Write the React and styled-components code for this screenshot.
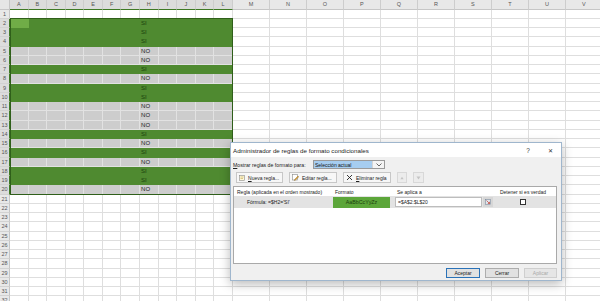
import styled, { createGlobalStyle } from "styled-components";

const GlobalStyle = createGlobalStyle`
  html, body { margin: 0; padding: 0; background: #fff; overflow: hidden; }
  body { font-family: "Liberation Sans", Arial, sans-serif; color: #222; }
`;

const COLS = "ABCDEFGHIJKLMNOPQRSTUV".split("");
const ROWS = 32;
const DATA = {
  2: "SI", 3: "SI", 4: "SI", 5: "NO", 6: "NO", 7: "SI", 8: "NO", 9: "SI", 10: "SI",
  11: "NO", 12: "NO", 13: "NO", 14: "SI", 15: "NO", 16: "SI", 17: "NO", 18: "SI",
  19: "SI", 20: "NO",
};

const FILL = { green: "#4f8a30", gray: "#cdcdcd", active: "#70ad47", none: "#fff" };
const LINE = { green: "#4f8a30", gray: "#e2e2e2", active: "#70ad47", none: "#dedede" };

function Sheet() {
  const cells = [<Corner key="corner" />];
  COLS.forEach((c, i) => cells.push(<ColHead key={c} $sel={i < 12}>{c}</ColHead>));
  for (let r = 1; r <= ROWS; r++) {
    const inRange = r >= 2 && r <= 20;
    cells.push(<RowHead key={"h" + r} $sel={inRange}>{r}</RowHead>);
    COLS.forEach((c, i) => {
      let fill = "none";
      if (inRange && i < 12) fill = DATA[r] === "SI" ? "green" : "gray";
      if (r === 2 && i === 0) fill = "active";
      cells.push(
        <Cell key={c + r} $fill={fill}>
          {inRange && i === 7 ? <CellText $yes={DATA[r] === "SI"}>{DATA[r]}</CellText> : null}
        </Cell>
      );
    });
  }
  return (
    <Grid>
      {cells}
      <Selection />
    </Grid>
  );
}

function Dialog() {
  return (
    <Window>
      <TitleBar>
        <TitleText>Administrador de reglas de formato condicionales</TitleText>
        <TitleBtn>?</TitleBtn>
        <TitleBtn $close>✕</TitleBtn>
      </TitleBar>
      <Body>
        <ShowRow>
          <ShowLabel><u>M</u>ostrar reglas de formato para:</ShowLabel>
          <Select>
            <SelectText>Selección actual</SelectText>
            <SelectArrow>
              <svg width="6" height="4" viewBox="0 0 6 4">
                <path d="M0.5 0.5 L3 3 L5.5 0.5" fill="none" stroke="#444" strokeWidth="0.8" />
              </svg>
            </SelectArrow>
          </Select>
        </ShowRow>
        <Toolbar>
          <ToolButton $w={47}>
            <svg width="6" height="6" viewBox="0 0 6 6">
              <rect x="0.5" y="0.5" width="5" height="5" fill="#fff7d6" stroke="#8a8a8a" strokeWidth="0.6" />
              <path d="M1.5 2 H4.5 M1.5 3.5 H4" stroke="#b59a3c" strokeWidth="0.5" />
            </svg>
            <span><u>N</u>ueva regla...</span>
          </ToolButton>
          <ToolButton $w={48}>
            <svg width="7" height="7" viewBox="0 0 7 7">
              <rect x="0.5" y="0.5" width="5" height="5.5" fill="#fff" stroke="#8a8a8a" strokeWidth="0.6" />
              <path d="M2.5 5.5 L6 2 L6.8 2.8 L3.3 6.3 L2.3 6.5 Z" fill="#e0a030" stroke="#6b5220" strokeWidth="0.3" />
            </svg>
            <span>Editar regla...</span>
          </ToolButton>
          <ToolButton $w={48}>
            <svg width="7" height="7" viewBox="0 0 7 7">
              <path d="M1 1 L6 6 M6 1 L1 6" stroke="#222" strokeWidth="0.9" />
            </svg>
            <span><u>E</u>liminar regla</span>
          </ToolButton>
          <ToolButton $w={10} $disabled>
            <svg width="5" height="4" viewBox="0 0 5 4">
              <path d="M0.5 3.5 L2.5 0.5 L4.5 3.5 Z" fill="#c4c4c4" />
            </svg>
          </ToolButton>
          <ToolButton $w={11} $disabled>
            <svg width="5" height="4" viewBox="0 0 5 4">
              <path d="M0.5 0.5 L2.5 3.5 L4.5 0.5 Z" fill="#c4c4c4" />
            </svg>
          </ToolButton>
        </Toolbar>
        <ListBox>
          <ListRow>
            <HeadCell>Regla (aplicada en el orden mostrado)</HeadCell>
            <HeadCell>Formato</HeadCell>
            <HeadCell $pad={4}>Se aplica a</HeadCell>
            <HeadCell $center>Detener si es verdad</HeadCell>
          </ListRow>
          <RuleRow>
            <RuleText>Fórmula: =$H2='SI'</RuleText>
            <PreviewCell>
              <Preview>AaBbCcYyZz</Preview>
            </PreviewCell>
            <RangeCell>
              <RangeInput>=$A$2:$L$20</RangeInput>
              <RangeButton>
                <svg width="6" height="6" viewBox="0 0 6 6">
                  <rect x="0.5" y="0.5" width="5" height="5" fill="#dfe6ee" stroke="#6c7c90" strokeWidth="0.5" />
                  <path d="M1.5 1.5 L4.5 4.5 M2.8 4.5 H4.5 V2.8" fill="none" stroke="#c0392b" strokeWidth="0.7" />
                </svg>
              </RangeButton>
            </RangeCell>
            <CheckCell>
              <CheckBox />
            </CheckCell>
          </RuleRow>
        </ListBox>
        <Footer>
          <DlgButton $w={34} $primary>Aceptar</DlgButton>
          <DlgButton $w={34}>Cerrar</DlgButton>
          <DlgButton $w={33} $disabled>Aplicar</DlgButton>
        </Footer>
      </Body>
    </Window>
  );
}

export default function App() {
  return (
    <>
      <GlobalStyle />
      <Screen>
        <Sheet />
        <Dialog />
      </Screen>
    </>
  );
}

const Screen = styled.div`
  position: relative;
  width: 600px;
  height: 301px;
  overflow: hidden;
`;

const Grid = styled.div`
  position: relative;
  display: grid;
  grid-template-columns: 10px repeat(12, 18.58px) repeat(10, 37px);
  grid-template-rows: 9.5px;
  grid-auto-rows: 9.25px;
  width: 600px;
  height: 301px;
  overflow: hidden;
  font-size: 6px;
`;

const Corner = styled.div`
  background: #e6e6e6;
  border-right: 1px solid #c6c6c6;
  border-bottom: 1px solid #c6c6c6;
  box-sizing: border-box;
`;

const ColHead = styled.div`
  display: flex;
  align-items: center;
  justify-content: center;
  background: ${(p) => (p.$sel ? "#dcdcdc" : "#e8e8e8")};
  border-right: 1px solid #cdcdcd;
  border-bottom: 1px solid ${(p) => (p.$sel ? "#3f7a25" : "#c6c6c6")};
  box-sizing: border-box;
  color: #555;
  font-size: 5.5px;
`;

const RowHead = styled.div`
  display: flex;
  align-items: center;
  justify-content: center;
  background: ${(p) => (p.$sel ? "#dcdcdc" : "#e8e8e8")};
  border-right: 1px solid ${(p) => (p.$sel ? "#3f7a25" : "#c6c6c6")};
  border-bottom: 1px solid #d2d2d2;
  box-sizing: border-box;
  color: #555;
  font-size: 5.5px;
  overflow: hidden;
`;

const Cell = styled.div`
  display: flex;
  align-items: center;
  background: ${(p) => FILL[p.$fill]};
  border-right: 1px solid ${(p) => LINE[p.$fill]};
  border-bottom: 1px solid ${(p) => LINE[p.$fill]};
  box-sizing: border-box;
  overflow: visible;
  white-space: nowrap;
`;

const CellText = styled.span`
  padding-left: 1px;
  color: ${(p) => (p.$yes ? "#1c420d" : "#222")};
  font-size: 6px;
`;

const Selection = styled.div`
  position: absolute;
  left: 10px;
  top: 18.25px;
  width: 223px;
  height: 176.25px;
  border: 1px solid #2f5f1a;
  box-sizing: border-box;
  pointer-events: none;
`;

const Window = styled.div`
  position: absolute;
  left: 230px;
  top: 142px;
  width: 332px;
  height: 139px;
  box-sizing: border-box;
  display: flex;
  flex-direction: column;
  border: 1px solid #9fb6cd;
  background: #f0f0f0;
  box-shadow: 0 3px 10px rgba(0, 0, 0, 0.28);
  font-size: 5px;
  color: #222;
`;

const TitleBar = styled.div`
  display: flex;
  align-items: center;
  height: 14px;
  padding-left: 2px;
  background: #fff;
  flex-shrink: 0;
`;

const TitleText = styled.div`
  flex: 1;
  font-size: 6.2px;
`;

const TitleBtn = styled.div`
  width: 22px;
  height: 14px;
  display: flex;
  align-items: center;
  justify-content: center;
  font-size: ${(p) => (p.$close ? "6px" : "6.5px")};
  color: #333;
`;

const Body = styled.div`
  flex: 1;
  display: flex;
  flex-direction: column;
  padding: 3px 4px 2px 2px;
`;

const ShowRow = styled.div`
  display: flex;
  align-items: center;
  height: 9px;
`;

const ShowLabel = styled.div`
  width: 80px;
  white-space: nowrap;
  font-size: 5.2px;
`;

const Select = styled.div`
  display: flex;
  width: 72px;
  height: 9px;
  box-sizing: border-box;
  border: 1px solid #9a9a9a;
  background: #fff;
`;

const SelectText = styled.div`
  flex: 1;
  display: flex;
  align-items: center;
  padding-left: 1px;
  background: #a6cdf0;
  color: #111;
  font-size: 5px;
`;

const SelectArrow = styled.div`
  width: 11px;
  display: flex;
  align-items: center;
  justify-content: center;
  background: #f4f4f4;
  border-left: 1px solid #d4d4d4;
`;

const Toolbar = styled.div`
  display: flex;
  gap: 6px;
  height: 11px;
  margin-top: 3px;
  padding-left: 3px;
`;

const ToolButton = styled.div`
  display: flex;
  align-items: center;
  justify-content: ${(p) => (p.$disabled ? "center" : "flex-start")};
  gap: 3px;
  width: ${(p) => p.$w}px;
  height: 11px;
  box-sizing: border-box;
  padding: 0 2px;
  border: 1px solid ${(p) => (p.$disabled ? "#d8d8d8" : "#c7c7c7")};
  background: ${(p) => (p.$disabled ? "#ececec" : "#f7f7f7")};
  white-space: nowrap;
  font-size: 5px;
`;

const ListBox = styled.div`
  height: 78px;
  margin-top: 3px;
  box-sizing: border-box;
  border: 1px solid #a9a9a9;
  background: #fff;
`;

const ListRow = styled.div`
  display: grid;
  grid-template-columns: 98px 61px 102px 56px;
  align-items: center;
  height: 9px;
`;

const HeadCell = styled.div`
  padding-left: ${(p) => (p.$center ? 0 : p.$pad || 3)}px;
  text-align: ${(p) => (p.$center ? "center" : "left")};
  white-space: nowrap;
  font-size: 5px;
`;

const RuleRow = styled(ListRow)`
  height: 12px;
  background: #e3e3e3;
`;

const RuleText = styled.div`
  padding-left: 13px;
  white-space: nowrap;
  font-size: 5px;
`;

const PreviewCell = styled.div`
  padding-left: 1px;
`;

const Preview = styled.div`
  display: flex;
  align-items: center;
  justify-content: center;
  width: 57px;
  height: 11px;
  background: #5ca63a;
  color: #1d3f0f;
  font-size: 5.3px;
`;

const RangeCell = styled.div`
  display: flex;
  align-items: center;
  padding-left: 2px;
`;

const RangeInput = styled.div`
  display: flex;
  align-items: center;
  width: 87px;
  height: 10px;
  box-sizing: border-box;
  padding-left: 2px;
  border: 1px solid #bdbdbd;
  background: #fff;
  font-size: 5px;
`;

const RangeButton = styled.div`
  display: flex;
  align-items: center;
  justify-content: center;
  width: 10px;
  height: 10px;
  margin-left: 1px;
  background: #d6d6d6;
`;

const CheckCell = styled.div`
  display: flex;
  justify-content: center;
`;

const CheckBox = styled.div`
  width: 6px;
  height: 6px;
  box-sizing: border-box;
  border: 1px solid #333;
  background: #fff;
`;

const Footer = styled.div`
  display: flex;
  justify-content: flex-end;
  gap: 5px;
  margin-top: 4px;
`;

const DlgButton = styled.div`
  display: flex;
  align-items: center;
  justify-content: center;
  width: ${(p) => p.$w}px;
  height: 10px;
  box-sizing: border-box;
  border: 1px solid ${(p) => (p.$primary ? "#2a72b8" : p.$disabled ? "#cfcfcf" : "#adadad")};
  background: ${(p) => (p.$disabled ? "#e6e6e6" : "#e1e1e1")};
  color: ${(p) => (p.$disabled ? "#a8a8a8" : "#222")};
  font-size: 5px;
`;
